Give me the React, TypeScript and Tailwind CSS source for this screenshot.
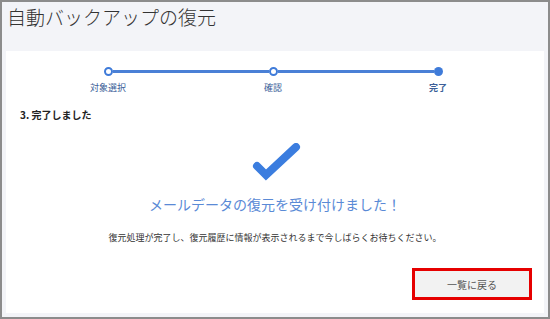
const steps = ["対象選択", "確認", "完了"];

function Check() {
  return (
    <svg width="52" height="42" viewBox="0 0 52 42" fill="none">
      <polyline
        points="7,23 16,32 46,4"
        stroke="#3b7ddf"
        strokeWidth="8"
        strokeLinecap="round"
        strokeLinejoin="miter"
      />
    </svg>
  );
}

export default function App() {
  return (
    <div
      className="w-[550px] h-[319px] border-2 border-[#8c8c8c] bg-[#f3f4f8] flex flex-col overflow-hidden"
      style={{ fontFamily: '"Noto Sans CJK JP", "Noto Sans", sans-serif' }}
    >
      <h1 className="h-[49px] pl-[5px] pt-[1px] text-[19px] leading-[28px] font-light text-[#333]">
        自動バックアップの復元
      </h1>

      <div className="ml-[4px] w-[538px] h-[262px] bg-white flex flex-col">
        {/* stepper */}
        <div className="mt-[16px] ml-[98px] w-[339px] flex items-center">
          <span className="w-[9px] h-[9px] rounded-full border-2 border-[#3f7bd9] bg-white" />
          <span className="flex-1 h-[3px] bg-[#4a80d6]" />
          <span className="w-[9px] h-[9px] rounded-full border-2 border-[#3f7bd9] bg-white" />
          <span className="flex-1 h-[3px] bg-[#4a80d6]" />
          <span className="w-[9px] h-[9px] rounded-full bg-[#3f7bd9]" />
        </div>
        <div className="mt-[6px] ml-[72px] w-[390px] flex justify-between">
          {steps.map((s, i) => (
            <span
              key={s}
              className={`w-[60px] text-center text-[9px] leading-[12px] text-[#3c5f99] ${
                i === 2 ? "font-bold" : ""
              }`}
            >
              {s}
            </span>
          ))}
        </div>

        <p className="mt-[14px] ml-[14px] text-[10px] leading-[14px] font-bold text-[#222]">
          3. 完了しました
        </p>

        <div className="mt-[21px] flex justify-center pl-[2px]">
          <Check />
        </div>

        <p className="mt-[9px] text-center text-[14px] leading-[20px] text-[#5a8ad6]">
          メールデータの復元を受け付けました！
        </p>

        <p className="mt-[18px] text-center text-[9px] leading-[12px] text-[#333]">
          復元処理が完了し、復元履歴に情報が表示されるまで今しばらくお待ちください。
        </p>

        <div className="mt-[24px] flex justify-end pr-[12px]">
          <div className="w-[120px] h-[32px] border-[3px] border-[#e60000] bg-[#f2f2f2] flex items-center justify-center">
            <button className="w-full h-full text-[10px] text-[#555] bg-[#f2f2f2]">
              一覧に戻る
            </button>
          </div>
        </div>
      </div>
    </div>
  );
}
